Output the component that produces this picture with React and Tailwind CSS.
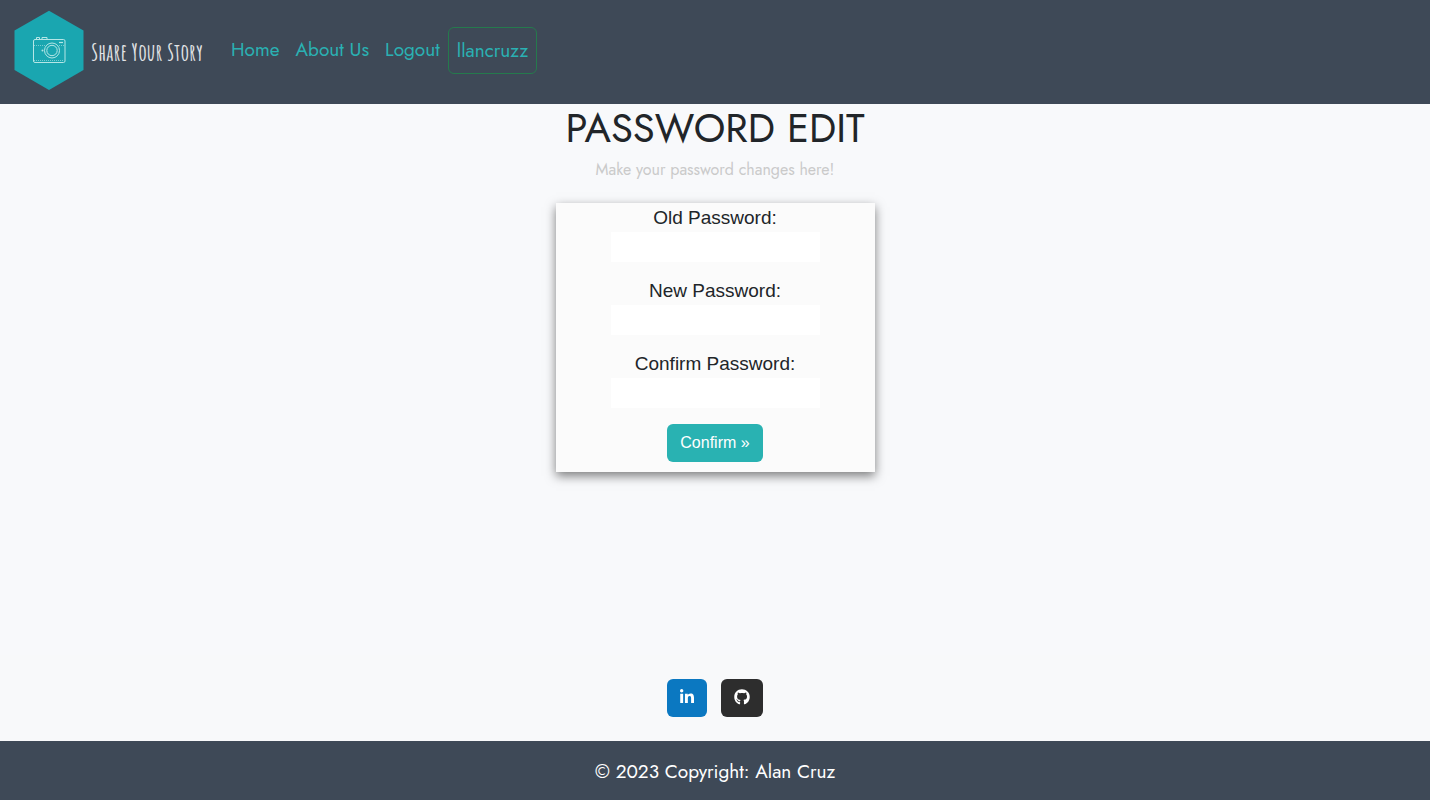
import React from "react";
import { FaLinkedinIn, FaGithub } from "react-icons/fa";

const navLinks = ["Home", "About Us", "Logout"];

const fields = [
  { id: "old-password", label: "Old Password:" },
  { id: "new-password", label: "New Password:" },
  { id: "confirm-password", label: "Confirm Password:" },
];

function Logo() {
  return (
    <a href="#home" className="flex items-center gap-[7px]">
      <svg viewBox="0 0 70 80" className="h-20 w-[70px]" aria-hidden="true">
        <path d="M35 0.8 69.5 20.5V60L35 80 0.5 60V20.5Z" fill="#1aa6b0" />
        <g fill="none" stroke="#b5e6e6" strokeWidth="1">
          <rect x="19.5" y="29.5" width="31.5" height="23" rx="1.5" />
          <path d="M22.5 29V27.5H25.5V29M28 29V27.5H33V29" />
          <path d="M20 35.5H31M45 35.5H50M20 50.5H50" strokeDasharray="1 1" strokeOpacity=".6" />
          <circle cx="38" cy="40.5" r="7.5" fill="#1aa6b0" />
          <circle cx="38" cy="40.5" r="5.2" />
          <path d="M45 32.5H49" strokeWidth="1.2" />
        </g>
        <circle cx="28.5" cy="40.5" r="1" fill="#b5e6e6" />
      </svg>
      <span className="min-w-28 pt-1 font-['Amatic_SC','Liberation_Sans_Narrow','Liberation_Sans',sans-serif] text-2xl leading-8 font-bold whitespace-nowrap text-[#e2e4e6]">
        Share Your Story
      </span>
    </a>
  );
}

export default function App() {
  return (
    <div className="flex min-h-screen flex-col bg-[#f8f9fb] font-['Jost','Lato',sans-serif] text-[#212529]">
      <header className="flex h-[104px] items-start bg-[#3e4957] px-3.5 pt-2.5">
        <Logo />
        <nav className="ml-5 flex items-start pt-[17px] text-[19px] leading-[29px] text-[#2ab1b3]">
          {navLinks.map((link) => (
            <a key={link} href="#nav" className="px-2 py-2 whitespace-nowrap">
              {link}
            </a>
          ))}
          <a href="#profile" className="rounded-md border border-[#257a4d] px-2 py-2">
            llancruzz
          </a>
        </nav>
      </header>

      <main className="flex flex-1 flex-col items-center">
        <h1 className="text-[40px] leading-12 font-normal">PASSWORD EDIT</h1>
        <p className="mt-1.5 text-base leading-6 text-[#cacaca]">
          Make your password changes here!
        </p>
        <form
          onSubmit={(event) => event.preventDefault()}
          className="mt-[21px] flex w-[319px] flex-col items-center bg-[#fbfbfb] pb-2.5 font-['Liberation_Sans',sans-serif] shadow-[0_4px_10px_rgba(0,0,0,0.5)]"
        >
          <div className="mb-4 flex flex-col gap-3.5">
            {fields.map(({ id, label }) => (
              <div key={id} className="flex flex-col items-center">
                <label htmlFor={id} className="text-[19px] leading-[29px]">
                  {label}
                </label>
                <input id={id} type="password" className="h-[30px] w-[209px] bg-white px-1" />
              </div>
            ))}
          </div>
          <button type="submit" className="rounded-md bg-[#29b2b2] px-[13px] py-[7px] text-base leading-6 text-white">
            Confirm »
          </button>
        </form>
      </main>

      <footer>
        <div className="flex justify-center gap-3.5 bg-[#f8f9fa] py-6">
          <a
            href="#linkedin"
            aria-label="LinkedIn"
            className="flex h-[38px] w-10 items-start justify-center rounded-md bg-[#0b78c1] pt-2.5 text-white"
          >
            <FaLinkedinIn size={16} />
          </a>
          <a
            href="#github"
            aria-label="GitHub"
            className="flex h-[38px] w-[42px] items-start justify-center rounded-md bg-[#2d2d2d] pt-2.5 text-white"
          >
            <FaGithub size={16} />
          </a>
        </div>
        <div className="bg-[#3e4957] pt-4 pb-3.5 text-center text-[19px] leading-[29px] text-white">
          © 2023 Copyright: Alan Cruz
        </div>
      </footer>
    </div>
  );
}
